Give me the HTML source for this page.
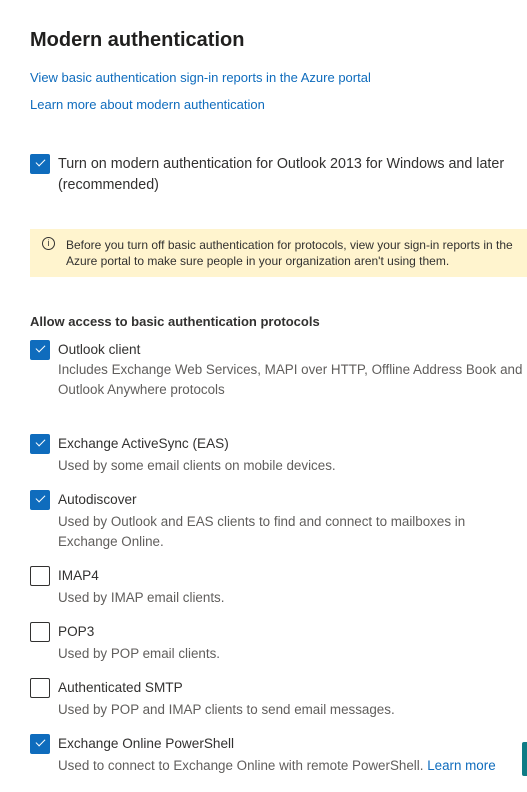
<!DOCTYPE html>
<html><head><meta charset="utf-8"><style>
body{margin:0;width:527px;height:792px;background:#fff;font-family:"Liberation Sans",sans-serif;position:relative;overflow:hidden;color:#323130}
.a{position:absolute;white-space:nowrap}
h1{position:absolute;left:30px;top:29px;margin:0;font-size:20px;font-weight:bold;color:#201f1e}
.lk{color:#0f6cbd;font-size:13px}
.cb{position:absolute;left:30px;width:20px;height:20px;box-sizing:border-box;border-radius:2px}
.on{background:#0f6cbd}
.off{border:1px solid #323130;background:#fff}
.on::after{content:"";position:absolute;left:6px;top:5px;width:8px;height:4px;border-left:1.6px solid #fff;border-bottom:1.6px solid #fff;transform:rotate(-45deg)}
.lb{left:58px;font-size:13.6px;color:#323130}
.ds{left:58px;font-size:13.4px;color:#605e5c;line-height:20px}
</style></head><body>
<h1>Modern authentication</h1>
<div class="a lk" style="left:30px;top:70px">View basic authentication sign-in reports in the Azure portal</div>
<div class="a lk" style="left:30px;top:97px">Learn more about modern authentication</div>
<div class="cb on" style="top:154px"></div>
<div class="a" style="left:58px;top:154px;line-height:21px;font-size:14.3px">Turn on modern authentication for Outlook 2013 for Windows and later<br>(recommended)</div>
<div class="a" style="left:30px;top:229px;width:497px;height:48px;background:#fff4ce"></div>
<div class="a" style="left:42px;top:237px;width:13px;height:13px;border:1px solid #323130;border-radius:50%;box-sizing:border-box;font-size:9px;text-align:center;line-height:11px">i</div>
<div class="a" style="left:66px;top:237px;font-size:12px;line-height:16px;color:#323130">Before you turn off basic authentication for protocols, view your sign-in reports in the<br>Azure portal to make sure people in your organization aren't using them.</div>
<div class="a" style="left:30px;top:314px;font-size:13px;font-weight:bold;color:#323130">Allow access to basic authentication protocols</div>
<div class="cb on" style="top:340px"></div>
<div class="a lb" style="top:342px">Outlook client</div>
<div class="a ds" style="top:360px">Includes Exchange Web Services, MAPI over HTTP, Offline Address Book and<br>Outlook Anywhere protocols</div>
<div class="cb on" style="top:434px"></div>
<div class="a lb" style="top:436px">Exchange ActiveSync (EAS)</div>
<div class="a ds" style="top:456px">Used by some email clients on mobile devices.</div>
<div class="cb on" style="top:490px"></div>
<div class="a lb" style="top:492px">Autodiscover</div>
<div class="a ds" style="top:512px">Used by Outlook and EAS clients to find and connect to mailboxes in<br>Exchange Online.</div>
<div class="cb off" style="top:566px"></div>
<div class="a lb" style="top:568px">IMAP4</div>
<div class="a ds" style="top:588px">Used by IMAP email clients.</div>
<div class="cb off" style="top:622px"></div>
<div class="a lb" style="top:624px">POP3</div>
<div class="a ds" style="top:644px">Used by POP email clients.</div>
<div class="cb off" style="top:678px"></div>
<div class="a lb" style="top:680px">Authenticated SMTP</div>
<div class="a ds" style="top:700px">Used by POP and IMAP clients to send email messages.</div>
<div class="cb on" style="top:734px"></div>
<div class="a lb" style="top:736px">Exchange Online PowerShell</div>
<div class="a ds" style="top:756px">Used to connect to Exchange Online with remote PowerShell. <span style="color:#0f6cbd">Learn more</span></div>
<div class="a" style="left:522px;top:742px;width:5px;height:34px;background:#0f7c86;border-radius:2px 0 0 2px"></div>
</body></html>
